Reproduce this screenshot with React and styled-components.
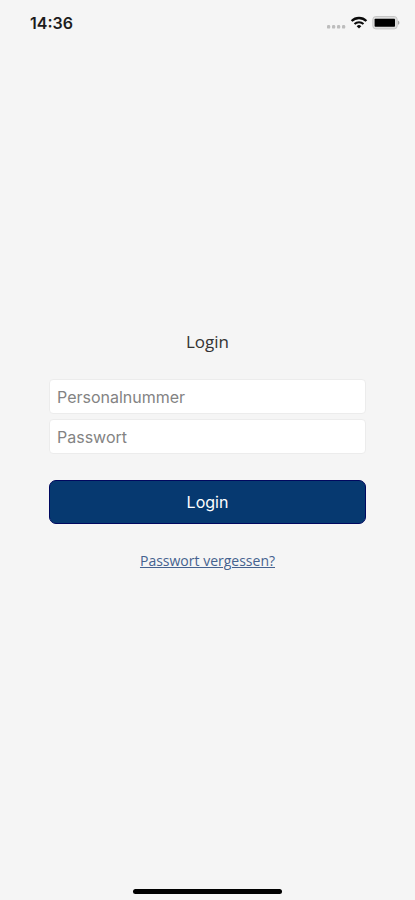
import { useState } from "react";
import styled, { createGlobalStyle } from "styled-components";

const App = () => {
  const [personnelNumber, setPersonnelNumber] = useState("");
  const [password, setPassword] = useState("");

  const handleSubmit = (e) => {
    e.preventDefault();
  };

  return (
    <Screen>
      <GlobalStyle />
      <StatusBar>
        <Time>14:36</Time>
        <StatusIcons>
          <Signal />
          <Wifi />
          <Battery />
        </StatusIcons>
      </StatusBar>

      <Main>
        <Title>Login</Title>
        <Form onSubmit={handleSubmit}>
          <Fields>
            <Field
              type="text"
              aria-label="Personalnummer"
              placeholder="Personalnummer"
              value={personnelNumber}
              onChange={(e) => setPersonnelNumber(e.target.value)}
            />
            <Field
              type="password"
              aria-label="Passwort"
              placeholder="Passwort"
              value={password}
              onChange={(e) => setPassword(e.target.value)}
            />
          </Fields>
          <Button type="submit">Login</Button>
        </Form>
        <ForgotLink href="#passwort">Passwort vergessen?</ForgotLink>
      </Main>

      <HomeArea>
        <HomeIndicator />
      </HomeArea>
    </Screen>
  );
};

const Signal = () => (
  <svg width="20" height="14" viewBox="0 0 20 14" fill="#bdbdbd" aria-hidden="true">
    <rect x="1" y="9" width="3.2" height="3.6" rx="1.2" />
    <rect x="6" y="9" width="3.2" height="3.6" rx="1.2" />
    <rect x="11" y="9" width="3.2" height="3.6" rx="1.2" />
    <rect x="16" y="9" width="3.2" height="3.6" rx="1.2" />
  </svg>
);

const Wifi = () => (
  <svg width="18" height="14" viewBox="0 0 18 14" fill="none" aria-hidden="true">
    <path d="M1.6 5a10.6 10.6 0 0 1 14.8 0" stroke="#0a0a0a" strokeWidth="2.3" />
    <path d="M4.5 8a6.4 6.4 0 0 1 9 0" stroke="#0a0a0a" strokeWidth="2" />
    <path d="M6.7 10.2a3.3 3.3 0 0 1 4.6 0L9 12.6z" fill="#0a0a0a" />
  </svg>
);

const Battery = () => (
  <svg width="28" height="14" viewBox="0 0 28 14" aria-hidden="true">
    <rect x="0.8" y="0.5" width="24.4" height="12.4" rx="3" fill="#dedede" stroke="#c6c6c6" />
    <rect x="2.6" y="2.7" width="20.4" height="8" rx="0.8" fill="#000" />
    <path d="M26 4.8v4c.9-.3 1.4-1.1 1.4-2s-.5-1.7-1.4-2z" fill="#a5a5a5" />
  </svg>
);

const GlobalStyle = createGlobalStyle`
  * {
    box-sizing: border-box;
  }

  body {
    margin: 0;
    background: #f5f5f5;
    font-family: "Open Sans", sans-serif;
  }
`;

const Screen = styled.div`
  display: flex;
  flex-direction: column;
  min-height: 100vh;
`;

const StatusBar = styled.header`
  display: flex;
  align-items: center;
  justify-content: space-between;
  height: 49px;
  padding: 0 15px 3px 30px;
`;

const Time = styled.span`
  color: #1c1c1c;
  font-family: Inter, sans-serif;
  font-size: 16px;
  font-weight: 600;
  line-height: 20px;
`;

const StatusIcons = styled.div`
  display: flex;
  align-items: center;
  gap: 4px;
`;

const Main = styled.main`
  display: flex;
  flex: 1;
  flex-direction: column;
  align-items: center;
  justify-content: center;
  padding: 0 49px;
`;

const Title = styled.h1`
  margin: 0 0 25px;
  color: #333;
  font-size: 17px;
  font-weight: 400;
  line-height: 24px;
`;

const Form = styled.form`
  display: flex;
  flex-direction: column;
  gap: 26px;
  width: 100%;
  margin-bottom: 27px;
`;

const Fields = styled.div`
  display: flex;
  flex-direction: column;
  gap: 5px;
`;

const Field = styled.input`
  width: 100%;
  height: 35px;
  padding: 0 7px;
  border: 1px solid #ececec;
  border-radius: 4px;
  background: #fff;
  color: #333;
  font-family: Inter, sans-serif;
  font-size: 16px;

  &::placeholder {
    color: #838383;
    opacity: 1;
  }
`;

const Button = styled.button`
  width: 100%;
  height: 44px;
  padding: 0;
  border: 1px solid #00085f;
  border-radius: 7px;
  background: #063970;
  color: #fff;
  font-family: Inter, sans-serif;
  font-size: 16px;
  cursor: pointer;
`;

const ForgotLink = styled.a`
  color: #45628f;
  font-size: 14px;
  line-height: 20px;
`;

const HomeArea = styled.footer`
  display: flex;
  align-items: flex-end;
  justify-content: center;
  height: 48px;
  padding-bottom: 6px;
`;

const HomeIndicator = styled.div`
  width: 36%;
  height: 5px;
  border-radius: 3px;
  background: #000;
`;

export default App;
